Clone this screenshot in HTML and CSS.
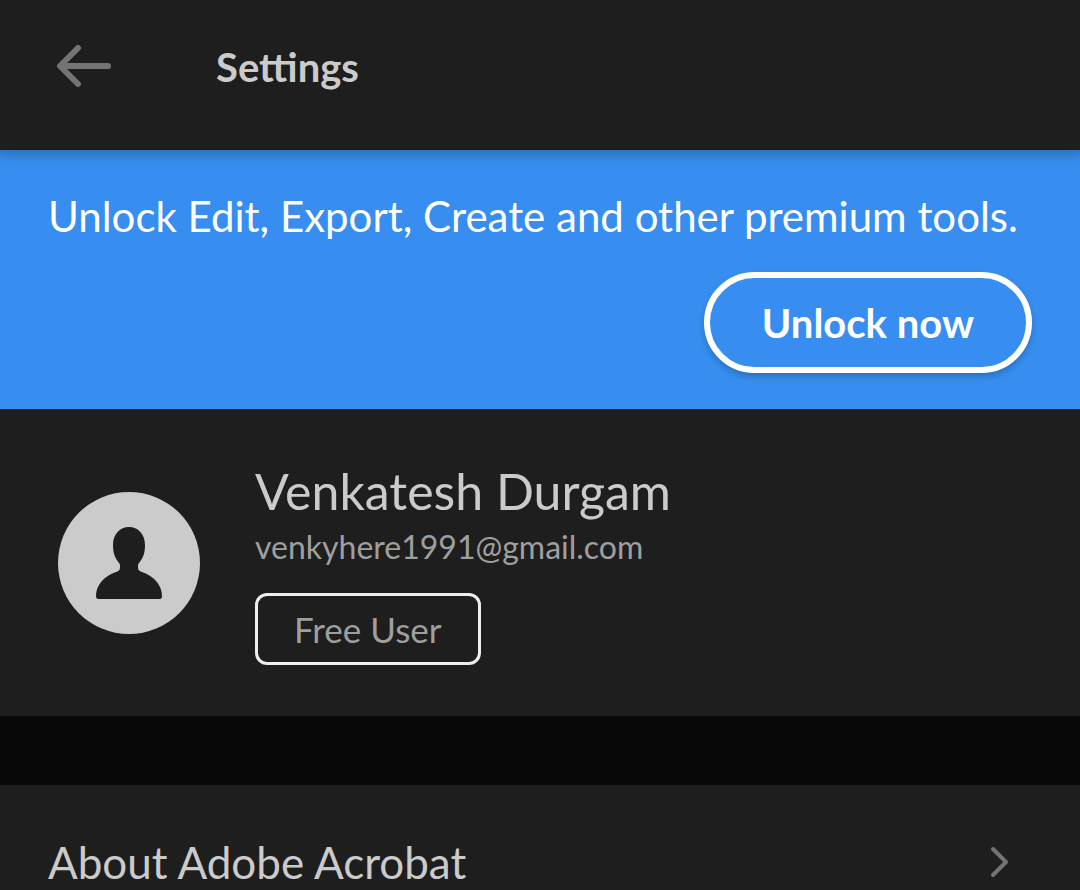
FILE: index.html
```html
<!DOCTYPE html>
<html lang="en">
<head>
    <meta charset="UTF-8">
    <meta name="viewport" content="width=device-width, initial-scale=1.0">
    <title>Settings</title>
    <link rel="stylesheet" href="styles.css">
</head>
<body>

<header class="header">
    <button class="back" type="button" aria-label="Back">
        <svg width="56" height="44" viewBox="0 0 56 44" fill="none" stroke="currentColor" stroke-width="6" stroke-linecap="round" stroke-linejoin="round">
            <path d="M52 21H5M22 3L4 21l18 18"/>
        </svg>
    </button>
    <h1>Settings</h1>
</header>

<section class="banner">
    <p>Unlock Edit, Export, Create and other premium tools.</p>
    <button class="unlock" type="button">Unlock now</button>
</section>

<section class="profile">
    <div class="avatar">
        <svg width="68" height="72" viewBox="0 0 68 72" fill="currentColor">
            <path d="M34 0C43 0 50 7 50 18c0 8-2 13-6 18-1 1-1 2-1 4 0 3 1 4 4 5 12 4 20 13 20 24 0 2-1 3-2 3H3c-1 0-2-1-2-3C1 58 9 49 21 45c3-1 4-2 4-5 0-2 0-3-1-4-4-5-6-10-6-18C18 7 25 0 34 0z"/>
        </svg>
    </div>
    <div class="details">
        <h2>Venkatesh Durgam</h2>
        <p class="email">venkyhere1991@gmail.com</p>
        <span class="plan">Free User</span>
    </div>
</section>

<nav class="menu">
    <a class="row" href="#about">
        <span>About Adobe Acrobat</span>
        <svg width="20" height="32" viewBox="0 0 20 32" fill="none" stroke="currentColor" stroke-width="4" stroke-linecap="round" stroke-linejoin="round">
            <path d="M3 3l13 13L3 29"/>
        </svg>
    </a>
</nav>

</body>
</html>
```
FILE: styles.css
```css
* {
    box-sizing: border-box;
}
body {
    font-family: Lato, "Open Sans", sans-serif;
    margin: 0;
    background-color: #080808;
    color: #cbcbcb;
}
h1, h2, p {
    margin: 0;
    font-weight: normal;
}
button {
    font-family: inherit;
    background: none;
    border: none;
    padding: 0;
    cursor: pointer;
}
svg {
    display: block;
}
.header {
    position: relative;
    display: flex;
    align-items: center;
    gap: 104px;
    padding: 40px 56px 56px;
    background-color: #1e1e1e;
    box-shadow: 0 0 12px 4px rgba(0, 0, 0, 0.25);
}
.header h1 {
    font-size: 40px;
    line-height: 54px;
    font-weight: bold;
}
.back {
    color: #747474;
}
.banner {
    display: flex;
    flex-direction: column;
    gap: 29px;
    padding: 39px 48px 36px;
    background-color: #378ef0;
    color: white;
}
.banner p {
    font-size: 42px;
    line-height: 54px;
}
.unlock {
    align-self: flex-end;
    padding: 21px 52px 19px;
    border: 6px solid white;
    border-radius: 52px;
    color: white;
    font-size: 40px;
    line-height: 49px;
    font-weight: bold;
    box-shadow: 0 4px 6px rgba(0, 0, 0, 0.2);
}
.profile {
    display: flex;
    align-items: center;
    gap: 55px;
    padding: 51px 58px;
    background-color: #1e1e1e;
}
.avatar {
    display: flex;
    flex-shrink: 0;
    align-items: center;
    justify-content: center;
    width: 142px;
    height: 142px;
    border-radius: 50%;
    background-color: #cbcbcb;
    color: #1e1e1e;
}
.details h2 {
    font-size: 50px;
    line-height: 62px;
}
.email {
    margin-bottom: 21px;
    color: #9f9f9f;
    font-size: 32px;
    line-height: 50px;
}
.plan {
    display: inline-block;
    padding: 10px 36px;
    border: 3px solid #eeeeee;
    border-radius: 12px;
    color: #9f9f9f;
    font-size: 35px;
    line-height: 46px;
    vertical-align: top;
}
.menu {
    margin-top: 69px;
}
.row {
    display: flex;
    align-items: center;
    justify-content: space-between;
    padding: 50px 70px 1px 48px;
    background-color: #1e1e1e;
    color: #cbcbcb;
    font-size: 44px;
    line-height: 54px;
    text-decoration: none;
}
.row svg {
    color: #747474;
}
```
